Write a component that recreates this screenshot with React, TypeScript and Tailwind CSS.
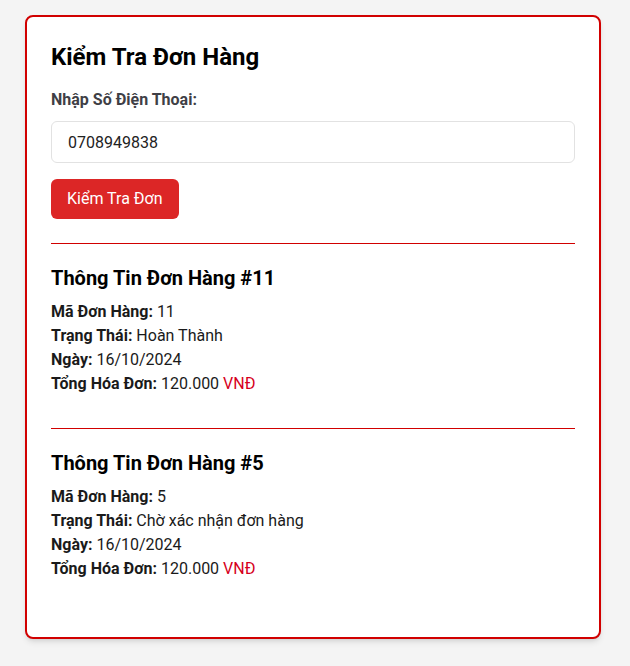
import { useState } from 'react';

type Order = {
  id: number;
  status: string;
  date: string;
  total: string;
};

const orders: Order[] = [
  { id: 11, status: 'Hoàn Thành', date: '16/10/2024', total: '120.000' },
  { id: 5, status: 'Chờ xác nhận đơn hàng', date: '16/10/2024', total: '120.000' },
];

function OrderInfo({ order }: { order: Order }) {
  return (
    <div className="border-t border-[#d10000] pt-5 pb-8">
      <h3 className="text-xl leading-7 font-bold text-black mb-2">Thông Tin Đơn Hàng #{order.id}</h3>
      <p className="leading-6"><strong>Mã Đơn Hàng:</strong> {order.id}</p>
      <p className="leading-6"><strong>Trạng Thái:</strong> {order.status}</p>
      <p className="leading-6"><strong>Ngày:</strong> {order.date}</p>
      <p className="leading-6">
        <strong>Tổng Hóa Đơn:</strong> {order.total} <span className="text-[#d6001c]">VNĐ</span>
      </p>
    </div>
  );
}

export default function App() {
  const [phone, setPhone] = useState('0708949838');

  return (
    <div className="min-h-screen bg-[#f4f4f4] pt-[15px] pl-[25px] font-['Roboto',sans-serif] text-[#1a1a1a]">
      <div className="w-[576px] bg-white border-2 border-[#d10000] rounded-lg shadow-md px-6 pt-6 pb-6">
        <h2 className="text-2xl leading-8 font-bold text-black mb-[17px]">Kiểm Tra Đơn Hàng</h2>
        <label className="block text-base leading-5 font-bold text-[#3f3f46] mb-[11px]">Nhập Số Điện Thoại:</label>
        <input
          value={phone}
          onChange={(e) => setPhone(e.target.value)}
          className="block w-full h-[42px] px-4 border border-[#e2e2e2] rounded-md text-base text-[#222] outline-none"
        />
        <button className="mt-4 h-10 px-4 bg-[#dc2626] text-white text-base rounded-md">Kiểm Tra Đơn</button>
        <div className="mt-6">
          {orders.map((o) => (
            <OrderInfo key={o.id} order={o} />
          ))}
        </div>
      </div>
    </div>
  );
}
